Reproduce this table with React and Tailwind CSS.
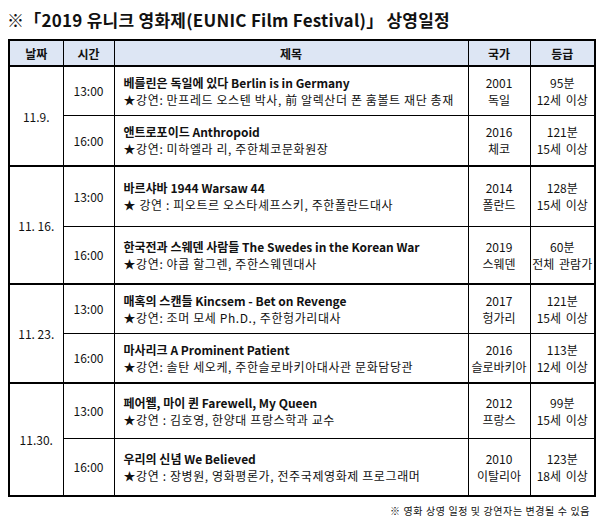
import React from "react";

const groups = [
  {
    date: "11.9.",
    rows: [
      {
        time: "13:00",
        h: 49,
        title: "베를린은 독일에 있다 Berlin is in Germany",
        talk: "★강연: 만프레드 오스텐 박사, 前 알렉산더 폰 훔볼트 재단 총재",
        year: "2001",
        country: "독일",
        len: "95분",
        grade: "12세 이상",
      },
      {
        time: "16:00",
        h: 51,
        title: "앤트로포이드 Anthropoid",
        talk: "★강연: 미하엘라 리, 주한체코문화원장",
        year: "2016",
        country: "체코",
        len: "121분",
        grade: "15세 이상",
      },
    ],
  },
  {
    date: "11. 16.",
    rows: [
      {
        time: "13:00",
        h: 60,
        title: "바르샤바 1944 Warsaw 44",
        talk: "★ 강연 : 피오트르 오스타셰프스키, 주한폴란드대사",
        year: "2014",
        country: "폴란드",
        len: "128분",
        grade: "15세 이상",
      },
      {
        time: "16:00",
        h: 58,
        title: "한국전과 스웨덴 사람들 The Swedes in the Korean War",
        talk: "★강연: 야콥 할그렌, 주한스웨덴대사",
        year: "2019",
        country: "스웨덴",
        len: "60분",
        grade: "전체 관람가",
      },
    ],
  },
  {
    date: "11. 23.",
    rows: [
      {
        time: "13:00",
        h: 49,
        title: "매혹의 스캔들 Kincsem - Bet on Revenge",
        talk: "★강연: 조머 모세 Ph.D., 주한헝가리대사",
        year: "2017",
        country: "헝가리",
        len: "121분",
        grade: "15세 이상",
      },
      {
        time: "16:00",
        h: 50,
        title: "마사리크 A Prominent Patient",
        talk: "★강연: 솔탄 세오케, 주한슬로바키아대사관 문화담당관",
        year: "2016",
        country: "슬로바키아",
        len: "113분",
        grade: "12세 이상",
      },
    ],
  },
  {
    date: "11.30.",
    rows: [
      {
        time: "13:00",
        h: 55,
        title: "페어웰, 마이 퀸 Farewell, My Queen",
        talk: "★강연 : 김호영, 한양대 프랑스학과 교수",
        year: "2012",
        country: "프랑스",
        len: "99분",
        grade: "15세 이상",
      },
      {
        time: "16:00",
        h: 58,
        title: "우리의 신념 We Believed",
        talk: "★강연 : 장병원, 영화평론가, 전주국제영화제 프로그래머",
        year: "2010",
        country: "이탈리아",
        len: "123분",
        grade: "18세 이상",
      },
    ],
  },
];

export default function App() {
  return (
    <div
      className="w-[600px] h-[522px] bg-white text-[#111] overflow-hidden"
      style={{ fontFamily: '"Noto Sans CJK KR", "Noto Sans", sans-serif' }}
    >
      {/* title */}
      <div className="h-[39px] flex items-center pl-[7px] text-[17px] font-bold tracking-[0.25px] leading-none">
        ※「2019 유니크 영화제(EUNIC Film Festival)」<span className="ml-[3px]">상영일정</span>
      </div>

      {/* schedule table */}
      <table className="ml-[8px] w-[586px] table-fixed border-collapse border-2 border-black text-[12px] leading-[17px]">
        <colgroup>
          <col className="w-[54px]" />
          <col className="w-[51px]" />
          <col className="w-[354px]" />
          <col className="w-[62px]" />
          <col className="w-[65px]" />
        </colgroup>
        <thead>
          <tr className="h-[26px] bg-[#dde6f4] font-bold">
            <th className="border border-black border-b-2 font-bold">날짜</th>
            <th className="border border-black border-b-2 font-bold">시간</th>
            <th className="border border-black border-b-2 font-bold">제목</th>
            <th className="border border-black border-b-2 font-bold">국가</th>
            <th className="border border-black border-b-2 font-bold">등급</th>
          </tr>
        </thead>
        <tbody>
          {groups.map((g) =>
            g.rows.map((r, i) => {
              const top = i === 0 ? "border-t-2" : "";
              return (
                <tr key={g.date + r.time} style={{ height: r.h }}>
                  {i === 0 && (
                    <td rowSpan={2} className="border border-black border-t-2 text-center">
                      {g.date}
                    </td>
                  )}
                  <td className={`border border-black text-center ${top}`}>{r.time}</td>
                  <td className={`border border-black pl-[9px] whitespace-nowrap ${top}`}>
                    <div className="font-bold">{r.title}</div>
                    <div className="tracking-[0.6px]">{r.talk}</div>
                  </td>
                  <td className={`border border-black text-center whitespace-nowrap ${top}`}>
                    <div>{r.year}</div>
                    <div>{r.country}</div>
                  </td>
                  <td className={`border border-black text-center whitespace-nowrap ${top}`}>
                    <div>{r.len}</div>
                    <div className="[word-spacing:2px]">{r.grade}</div>
                  </td>
                </tr>
              );
            })
          )}
        </tbody>
      </table>

      {/* note */}
      <div className="flex justify-end pr-[10px] pt-[6px] text-[10px] tracking-[0.6px]">
        ※ 영화 상영 일정 및 강연자는 변경될 수 있음
      </div>
    </div>
  );
}
